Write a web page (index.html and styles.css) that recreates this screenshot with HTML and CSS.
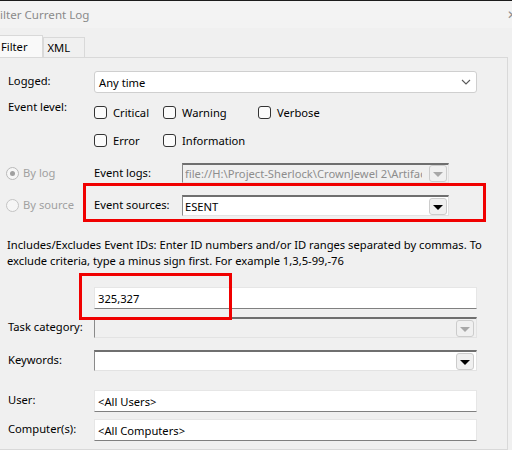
FILE: index.html
```html
<!DOCTYPE html>
<html lang="en">
<head>
    <meta charset="UTF-8">
    <title>Filter Current Log</title>
    <link rel="stylesheet" href="styles.css">
</head>
<body>
    <div class="titlebar">
        <span class="title">Filter Current Log</span>
        <span class="close">✕</span>
    </div>

    <div class="tabs">
        <div class="tab active">Filter</div>
        <div class="tab">XML</div>
    </div>

    <div class="panel">
        <div class="row">
            <span class="lbl">Logged:</span>
            <div class="combo modern">
                <span>Any time</span>
                <svg class="chevron" width="10" height="6" viewBox="0 0 10 6"><path d="M1 1 L5 5 L9 1" fill="none" stroke="#5a5a5a" stroke-width="1.1"/></svg>
            </div>
        </div>

        <div class="row row-level">
            <span class="lbl">Event level:</span>
            <div class="levels">
                <label class="check"><span class="box"></span>Critical</label>
                <label class="check"><span class="box"></span>Warning</label>
                <label class="check"><span class="box"></span>Verbose</label>
                <label class="check"><span class="box"></span>Error</label>
                <label class="check"><span class="box"></span>Information</label>
            </div>
        </div>

        <div class="source-row logs">
            <span class="radio checked"><span class="dot"></span></span>
            <span class="radio-text">By log</span>
            <span class="src-lbl">Event logs:</span>
            <div class="combo sunken disabled">
                <span class="path">file://H:\Project-Sherlock\CrownJewel 2\Artifacts</span>
                <span class="drop"><span class="tri"></span></span>
            </div>
        </div>

        <div class="source-row sources">
            <span class="radio"></span>
            <span class="radio-text">By source</span>
            <span class="src-lbl">Event sources:</span>
            <div class="combo sunken">
                <span>ESENT</span>
                <span class="drop"><span class="tri"></span></span>
            </div>
        </div>

        <p class="hint">Includes/Excludes Event IDs: Enter ID numbers and/or ID ranges separated by commas. To exclude criteria, type a minus sign first. For example 1,3,5-99,-76</p>

        <div class="row ids">
            <span class="lbl"></span>
            <div class="field">325,327</div>
        </div>

        <div class="row task">
            <span class="lbl">Task category:</span>
            <div class="combo sunken disabled wide">
                <span></span>
                <span class="drop"><span class="tri"></span></span>
            </div>
        </div>

        <div class="row keywords">
            <span class="lbl">Keywords:</span>
            <div class="combo sunken wide">
                <span></span>
                <span class="drop"><span class="tri"></span></span>
            </div>
        </div>

        <div class="row user">
            <span class="lbl">User:</span>
            <div class="field">&lt;All Users&gt;</div>
        </div>

        <div class="row computer">
            <span class="lbl">Computer(s):</span>
            <div class="field">&lt;All Computers&gt;</div>
        </div>

        <!-- highlight frames drawn over the form -->
        <div class="mark mark-source"></div>
        <div class="mark mark-ids"></div>
    </div>
</body>
</html>
```

FILE: styles.css
```css
body {
    margin: 0;
    background: #f0f0f0;
    font-family: "Noto Sans", "Open Sans", sans-serif;
    font-size: 11.2px;
    color: #000000;
    overflow: hidden;
}

.titlebar {
    height: 27px;
    border-top: 1px solid #1c1c1c;
    background: #f3f3f3;
    display: flex;
    align-items: center;
    justify-content: space-between;
}
.title {
    margin-left: -6px;
    color: #8a8a8a;
    font-size: 11.6px;
}
.close {
    margin-right: -5px;
    color: #8f8f8f;
    font-size: 12px;
}

.tabs {
    height: 29px;
    display: flex;
    align-items: flex-end;
}
.tab {
    height: 19px;
    padding: 0 14px 0 4px;
    border: 1px solid #d9d9d9;
    border-bottom: none;
    line-height: 19px;
    background: #f0f0f0;
}
.tab.active {
    height: 22px;
    margin-left: -6px;
    padding: 0 14px 0 6px;
    line-height: 21px;
    background: #f9f9f9;
    border-color: #d9d9d9;
    position: relative;
    top: 1px;
}

.panel {
    position: relative;
    width: 469px;
    height: 378px;
    margin-left: -1px;
    padding: 13px 30px 0 8px;
    border: 1px solid #d9d9d9;
}

.row {
    display: flex;
    align-items: center;
}
.lbl {
    width: 86px;
    flex: none;
    margin-bottom: 3px;
}

/* comboboxes and text fields */
.combo {
    flex: 1;
    display: flex;
    align-items: center;
    justify-content: space-between;
    box-sizing: border-box;
    background: #ffffff;
}
.combo.modern {
    height: 22px;
    padding: 0 4px;
    border: 1px solid #cfcfcf;
    border-radius: 3px;
}
.chevron {
    margin-right: 1px;
}
.combo.sunken {
    height: 21px;
    padding: 0 1px 0 2px;
    border-top: 2px solid #6f6f6f;
    border-left: 1px solid #8a8a8a;
    border-right: 1px solid #e3e3e3;
    border-bottom: 1px solid #e3e3e3;
}
.combo.disabled {
    background: #f0f0f0;
    color: #8d8d8d;
}
.path {
    white-space: nowrap;
    overflow: hidden;
    width: 237px;
}
.drop {
    width: 16px;
    height: 15px;
    border: 1px solid #cccccc;
    border-radius: 3px;
    background: #f0f0f0;
    display: flex;
    align-items: center;
    justify-content: center;
    flex: none;
}
.tri {
    width: 0;
    height: 0;
    border-left: 5px solid transparent;
    border-right: 5px solid transparent;
    border-top: 5px solid #000000;
    margin-top: 2px;
}
.disabled .tri {
    border-top-color: #a8a8a8;
}
.combo.wide .drop {
    margin-right: 1px;
}

.field {
    flex: 1;
    height: 22px;
    box-sizing: border-box;
    padding: 0 3px;
    line-height: 21px;
    background: #ffffff;
    border: 1px solid #e6e6e6;
    border-bottom-color: #808080;
}

/* event level checkboxes */
.row-level {
    margin-top: 6px;
    align-items: flex-start;
}
.row-level .lbl {
    line-height: 16px;
}
.levels {
    display: grid;
    grid-template-columns: 69px 95px auto;
    grid-auto-rows: 28px;
}
.check {
    display: flex;
    align-items: center;
    gap: 6px;
    padding-bottom: 1px;
}
.box {
    width: 11px;
    height: 11px;
    border: 1px solid #333333;
    border-radius: 3px;
    background: #fbfbfb;
}

/* log / source selection */
.source-row {
    display: grid;
    grid-template-columns: 17px 71px 88px 267px;
    align-items: center;
    margin-left: -2px;
}
.source-row .combo {
    width: 267px;
}
.logs {
    margin-top: 8px;
}
.logs .combo {
    height: 20px;
}
.sources {
    margin-top: 12px;
}
.src-lbl {
    margin-bottom: 2px;
}
.radio {
    width: 11px;
    height: 11px;
    border: 1px solid #c4c4c4;
    border-radius: 50%;
    background: #f6f6f6;
    display: flex;
    align-items: center;
    justify-content: center;
}
.radio.checked {
    border-color: #b9b9b9;
}
.dot {
    width: 5px;
    height: 5px;
    border-radius: 50%;
    background: #a0a0a0;
}
.radio-text {
    color: #a0a0a0;
    margin-bottom: 2px;
}

.hint {
    margin: 21px 0 0 -1px;
    line-height: 16px;
    width: 490px;
}

.ids {
    margin-top: 18px;
}
.task {
    margin-top: 8px;
}
.keywords {
    margin-top: 12px;
}
.user {
    margin-top: 19px;
}
.computer {
    margin-top: 7px;
}

.mark {
    position: absolute;
    border: 3px solid #f00000;
}
.mark-source {
    left: 83px;
    top: 125px;
    width: 397px;
    height: 33px;
}
.mark-ids {
    left: 79px;
    top: 215px;
    width: 147px;
    height: 41px;
}
```
